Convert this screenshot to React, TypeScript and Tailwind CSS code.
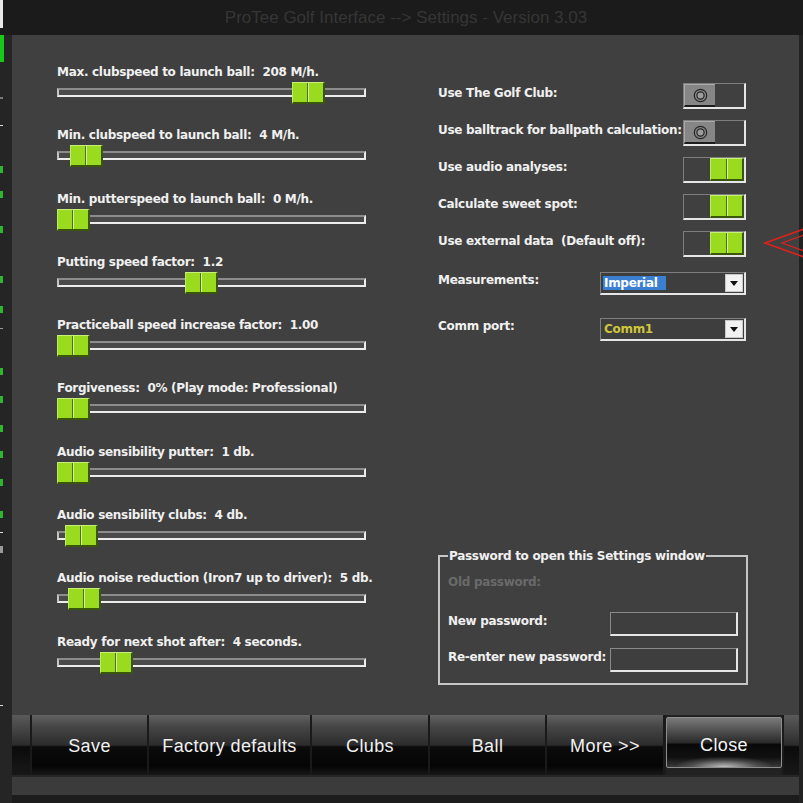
import React from "react";

const SLIDERS = [
  { label: "Max. clubspeed to launch ball:  208 M/h.", pos: 235 },
  { label: "Min. clubspeed to launch ball:  4 M/h.", pos: 13 },
  { label: "Min. putterspeed to launch ball:  0 M/h.", pos: 0 },
  { label: "Putting speed factor:  1.2", pos: 128 },
  { label: "Practiceball speed increase factor:  1.00", pos: 0 },
  { label: "Forgiveness:  0% (Play mode: Professional)", pos: 0 },
  { label: "Audio sensibility putter:  1 db.", pos: 0 },
  { label: "Audio sensibility clubs:  4 db.", pos: 8 },
  { label: "Audio noise reduction (Iron7 up to driver):  5 db.", pos: 11 },
  { label: "Ready for next shot after:  4 seconds.", pos: 43 },
];

const TOGGLES = [
  { label: "Use The Golf Club:", on: false },
  { label: "Use balltrack for ballpath calculation:", on: false },
  { label: "Use audio analyses:", on: true },
  { label: "Calculate sweet spot:", on: true },
  { label: "Use external data  (Default off):", on: true },
];

const BUTTONS = [
  { label: "Save", w: "w-[115px]" },
  { label: "Factory defaults", w: "w-[161px]" },
  { label: "Clubs", w: "w-[116px]" },
  { label: "Ball", w: "w-[115px]" },
  { label: "More >>", w: "w-[116px]" },
];

// marks of the app window behind, peeking out at the left edge
const BEHIND = [
  { top: 62, c: "bg-[#777]", h: "h-[2px]" },
  { top: 90, c: "bg-[#ddd]", h: "h-px" },
  { top: 131, c: "bg-[#2fb52f]", h: "h-[7px]" },
  { top: 156, c: "bg-[#2fb52f]", h: "h-[7px]" },
  { top: 191, c: "bg-[#2fb52f]", h: "h-[7px]" },
  { top: 241, c: "bg-[#2fb52f]", h: "h-[7px]" },
  { top: 271, c: "bg-[#2fb52f]", h: "h-[7px]" },
  { top: 293, c: "bg-[#999]", h: "h-px" },
  { top: 333, c: "bg-[#2fb52f]", h: "h-[7px]" },
  { top: 361, c: "bg-[#2fb52f]", h: "h-[7px]" },
  { top: 390, c: "bg-[#2fb52f]", h: "h-[7px]" },
  { top: 416, c: "bg-[#2fb52f]", h: "h-[7px]" },
  { top: 444, c: "bg-[#2fb52f]", h: "h-[7px]" },
  { top: 476, c: "bg-[#2fb52f]", h: "h-[7px]" },
  { top: 497, c: "bg-[#ddd]", h: "h-px" },
  { top: 511, c: "bg-[#999]", h: "h-[7px]" },
  { top: 670, c: "bg-[#ddd]", h: "h-px" },
];

const FONT = "font-['DejaVu_Sans',Verdana,sans-serif] text-[12px] leading-[14px] font-bold tracking-[-0.3px] whitespace-pre";
const LABEL = `${FONT} text-[#f0f0f0]`;

function GreenKnob() {
  return (
    <div className="flex h-full w-full border-t border-l border-b-2 border-r-2 border-t-[#c8ef7a] border-l-[#bfe96a] border-b-[#3a560c] border-r-[#3a560c] bg-[#9bdb1f]">
      <div className="flex-1" />
      <div className="w-px bg-[#4d6e12]" />
      <div className="w-px bg-[#d6f396]" />
      <div className="flex-1" />
    </div>
  );
}

function Slider({ label, pos }: { label: string; pos: number }) {
  return (
    <div className="flex h-[63.3px] flex-col">
      <div className={`${LABEL} pt-[2px]`}>{label}</div>
      <div className="relative mt-[3px] h-[22px] w-[309px]">
        <div className="absolute left-0 right-0 top-[6px] h-[9px] border-2 border-t-[#8c8c8c] border-l-[#c4c4c4] border-r-[#ececec] border-b-[#ececec] bg-[#4a4a4a]" />
        <div className="absolute top-0 h-[22px] w-[33px]" style={{ left: pos }}>
          <GreenKnob />
        </div>
      </div>
    </div>
  );
}

function Toggle({ on }: { on: boolean }) {
  return (
    <div className="flex h-[26px] w-[63px] shrink-0 border-t border-l border-r-2 border-b-2 border-t-[#7e7e7e] border-l-[#7e7e7e] border-r-[#e6e6e6] border-b-[#e6e6e6] bg-[#404040]">
      {on ? (
        <>
          <div className="flex-1" />
          <div className="h-full w-[34px]">
            <GreenKnob />
          </div>
        </>
      ) : (
        <>
          <div className="flex h-full w-[31px] items-center justify-center border-t border-l border-b-2 border-t-[#aaaaaa] border-l-[#aaaaaa] border-b-[#1c1c1c] bg-[#868686]">
            <svg width="15" height="15" viewBox="0 0 15 15">
              <circle cx="7.5" cy="7.5" r="6.2" fill="none" stroke="#262626" strokeWidth="1.2" />
              <circle cx="7.5" cy="7.5" r="3.6" fill="#9c9c9c" stroke="#262626" strokeWidth="1.2" />
            </svg>
          </div>
          <div className="flex-1" />
        </>
      )}
    </div>
  );
}

function Select({ value, highlight }: { value: string; highlight?: boolean }) {
  return (
    <div className="flex h-[23px] w-[146px] items-center border-t border-l border-r-2 border-b-2 border-t-[#7e7e7e] border-l-[#7e7e7e] border-r-[#e6e6e6] border-b-[#e6e6e6] bg-[#3e3e3e] pl-[2px] pr-px">
      <span className={`${FONT} ${highlight ? "bg-[#3b7fd2] pr-[8px] pl-px text-white" : "pl-px text-[#cdc53c]"}`}>{value}</span>
      <div className="ml-auto flex h-[18px] w-[18px] items-center justify-center border border-[#c8c8c8] bg-[#f2f2f2]">
        <svg width="8" height="5" viewBox="0 0 8 5">
          <path d="M0 0h8L4 5z" fill="#111" />
        </svg>
      </div>
    </div>
  );
}

function Field() {
  return (
    <div className="h-[24px] w-[128px] border-t border-l border-r-2 border-b-2 border-t-[#8a8a8a] border-l-[#8a8a8a] border-r-[#e6e6e6] border-b-[#e6e6e6] bg-[#3e3e3e]" />
  );
}

function BarButton({ label, w }: { label: string; w: string }) {
  return (
    <div
      className={`${w} flex items-center justify-center pt-[2px] bg-[linear-gradient(to_bottom,#626262_0%,#454545_20%,#2c2c2c_50%,#0b0b0b_53%,#050505_85%,#181818_100%)] font-['Liberation_Sans',Arial,sans-serif] text-[18px] tracking-[0.4px] text-[#f0f0f0]`}
    >
      {label}
    </div>
  );
}

export default function App() {
  return (
    <div className="relative flex h-[803px] w-[803px] flex-col overflow-hidden bg-[#1c1c1c]">
      {/* title bar */}
      <div className="flex h-[35px]">
        <div className="flex w-[3px] flex-col">
          <div className="h-[28px] bg-[#e8e8e8]" />
        </div>
        <div className="flex flex-1 items-center justify-center bg-[#1b1b1b] pl-[6px] font-['Liberation_Sans',Arial,sans-serif] text-[17px] text-[#363636]">
          ProTee Golf Interface --&gt; Settings - Version 3.03
        </div>
      </div>

      <div className="flex flex-1">
        <div className="relative w-[12px] overflow-hidden bg-[#252525]">
          <div className="absolute left-0 top-0 h-[27px] w-[4px] bg-[#19c919]" />
          {BEHIND.map((m) => (
            <div key={m.top} className={`absolute left-0 w-[3px] ${m.c} ${m.h}`} style={{ top: m.top }} />
          ))}
        </div>

        <div className="flex w-[787px] flex-col">
          {/* settings panel */}
          <div className="flex h-[680px] items-start bg-[#404040] pl-[45px] pt-[28px]">
            <div className="flex w-[309px] flex-col">
              {SLIDERS.map((s) => (
                <Slider key={s.label} label={s.label} pos={s.pos} />
              ))}
            </div>

            <div className="ml-[72px] flex w-[308px] flex-col pt-[20px]">
              <div className="flex flex-col gap-[11px]">
                {TOGGLES.map((t) => (
                  <div key={t.label} className="flex h-[26px] items-start justify-between">
                    <span className={`${LABEL} pt-[3px]`}>{t.label}</span>
                    <Toggle on={t.on} />
                  </div>
                ))}
              </div>

              <div className="mt-[15px] flex items-start justify-between">
                <span className={`${LABEL} pt-[1px]`}>Measurements:</span>
                <Select value="Imperial" highlight />
              </div>
              <div className="mt-[23px] flex items-start justify-between">
                <span className={`${LABEL} pt-[1px]`}>Comm port:</span>
                <Select value="Comm1" />
              </div>

              <fieldset className="mt-[208px] w-[309px] border-2 border-[#c6c6c6] px-[8px] pb-[11px]">
                <legend className={`${LABEL} px-px`}>Password to open this Settings window</legend>
                <div className={`${FONT} mt-[12px] text-[#6a6a6a]`}>Old password:</div>
                <div className="mt-[23px] flex items-start">
                  <span className={`${LABEL} w-[162px] pt-[2px]`}>New password:</span>
                  <Field />
                </div>
                <div className="mt-[12px] flex items-start">
                  <span className={`${LABEL} w-[162px] pt-[2px]`}>Re-enter new password:</span>
                  <Field />
                </div>
              </fieldset>
            </div>
          </div>

          {/* button bar */}
          <div className="flex h-[60px] gap-[2px] bg-[#1a1a1a]">
            <div className="w-[18px] bg-[linear-gradient(to_bottom,#5a5a5a_0%,#2c2c2c_50%,#0b0b0b_53%,#181818_100%)]" />
            {BUTTONS.map((b) => (
              <BarButton key={b.label} label={b.label} w={b.w} />
            ))}
            <div className="ml-px flex w-[116px] flex-col bg-[#222] pb-[7px] pt-[2px]">
              <div className="relative flex flex-1 items-center justify-center overflow-hidden rounded-[2px] border border-[#8e8e8e] pt-[5px] bg-[linear-gradient(to_bottom,#7a7a7a_0%,#4a4a4a_30%,#2a2a2a_50%,#080808_54%,#101010_80%,#3a3a3a_100%)] font-['Liberation_Sans',Arial,sans-serif] text-[18px] tracking-[0.4px] text-[#f4f4f4]">
                <div className="absolute bottom-0 left-[10px] right-[10px] h-[10px] bg-[radial-gradient(ellipse_at_bottom,#bdbdbd_0%,rgba(120,120,120,0.4)_50%,transparent_75%)]" />
                <span className="relative">Close</span>
              </div>
            </div>
            <div className="flex-1 bg-[linear-gradient(to_bottom,#5a5a5a_0%,#2c2c2c_50%,#0b0b0b_53%,#181818_100%)]" />
          </div>
          <div className="h-[2px] bg-[#262626]" />
          <div className="h-[18px] bg-[#3b3b3b]" />
        </div>

        <div className="w-[4px] bg-[#222]" />
      </div>

      {/* red pointer arrow over the right edge */}
      <svg className="absolute left-[760px] top-[226px]" width="43" height="34" viewBox="0 0 43 34">
        <polyline points="44,3 5,17 44,31" fill="none" stroke="#e0201c" strokeWidth="1.6" />
        <polyline points="44,9 22,17 44,25" fill="none" stroke="#e0201c" strokeWidth="1.2" />
      </svg>
    </div>
  );
}
